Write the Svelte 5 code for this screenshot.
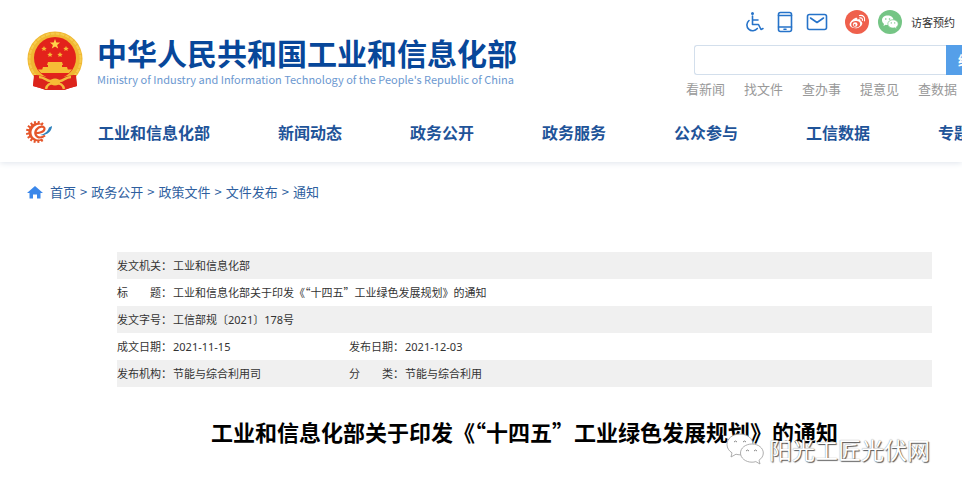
<script>
  const navItems = ['工业和信息化部', '新闻动态', '政务公开', '政务服务', '公众参与', '工信数据', '专题专栏'];
  const quickLinks = ['看新闻', '找文件', '查办事', '提意见', '查数据'];
  const crumbs = ['首页', '政务公开', '政策文件', '文件发布', '通知'];
  const title = '工业和信息化部关于印发《“十四五”工业绿色发展规划》的通知';
  const teeth = Array.from({ length: 12 }, (_, i) => 60 + i * 22);
</script>

<div class="page" lang="zh-CN">
  <header>
    <div class="top">
      <a class="brand" href="#home">
        <svg class="emblem" viewBox="0 0 56 60" aria-hidden="true">
          <path d="M8 40 6 55l7 2 6 2h18l6-2 7-2-2-15z" fill="#d8251c" />
          <circle cx="28" cy="28" r="27.500" fill="#f0b732" />
          <circle cx="28" cy="28" r="25.500" fill="none" stroke="#f6cb4c" stroke-width="2" stroke-dasharray="4 1" />
          <circle cx="28" cy="27" r="21" fill="#e3221b" />
          <path d="m28 8 1.300 3.600h3.800l-3 2.300 1.100 3.700-3.200-2.200-3.200 2.200 1.100-3.700-3-2.300h3.800z" fill="#ffd34a" />
          <g fill="#f6bd36">
            <path d="m17 15 .8 1.700 1.900.2-1.400 1.300.4 1.900-1.700-1-1.700 1 .4-1.900-1.400-1.300 1.900-.2z" />
            <path d="m39 15 .8 1.700 1.900.2-1.400 1.300.4 1.900-1.700-1-1.700 1 .4-1.900-1.400-1.300 1.900-.2z" />
            <path d="m23 21 .8 1.700 1.900.2-1.400 1.300.4 1.900-1.700-1-1.700 1 .4-1.900-1.400-1.300 1.900-.2z" />
            <path d="m33 21 .8 1.700 1.900.2-1.400 1.300.4 1.900-1.700-1-1.700 1 .4-1.900-1.400-1.300 1.900-.2z" />
            <path d="M21 31h14l1 3h-1v2h5l1 3H15l1-3h5v-2h-1zM11 38.500h34l-3 3.500H14z" />
          </g>
          <path d="M7 44c7 0 10 2 14 2l7-1 7 1c4 0 7-2 14-2l1 11-7 2-6 2H19l-6-2-7-2z" fill="#dc241c" />
          <path d="M12 46c6 0 7 4 11 4h10c4 0 5-4 11-4M19 58c1-5 4-6 9-6s8 1 9 6" fill="none" stroke="#f3ba3c" stroke-width="2.500" />
          <ellipse cx="28" cy="51" rx="5" ry="3.500" fill="#f6bd36" />
        </svg>
        <span class="names">
          <strong>中华人民共和国工业和信息化部</strong>
          <span class="en" lang="en">Ministry of Industry and Information Technology of the People's Republic of China</span>
        </span>
      </a>

      <div class="tools">
        <div class="icons">
          <a href="#access" aria-label="无障碍">
            <svg class="line" width="20" height="22" viewBox="0 0 20 22">
              <circle cx="8.500" cy="2.500" r="1.500" fill="#2673c9" stroke="none" />
              <path d="M8.500 5v8.500h6l2.500 5 2-1M8.500 9h5.500M5 9.500a5.800 5.800 0 1 0 8.300 8" />
            </svg>
          </a>
          <a href="#mobile" aria-label="手机版">
            <svg class="line" width="16" height="22" viewBox="0 0 16 22">
              <rect x="1.500" y="1.500" width="13" height="19" rx="2" />
              <path d="M1.500 4.500h13M1.500 16h13M7 18.300h2" />
            </svg>
          </a>
          <a href="#mail" aria-label="邮箱">
            <svg class="line" width="22" height="22" viewBox="0 0 22 22">
              <rect x="1.500" y="3.500" width="19" height="15" rx="2" />
              <path d="m4.500 7 6.500 4.500L17.500 7" />
            </svg>
          </a>
          <a class="weibo" href="#weibo" aria-label="微博">
            <svg width="24" height="24" viewBox="0 0 24 24">
              <circle cx="12" cy="12" r="12" fill="#ef604c" />
              <path d="M10 8.200c1.500-.7 2.700-.4 2.300 1.300 2-.8 3.800-.3 3.200 1.500 2.200.8 2.400 2.800.8 4.700-2.600 3-8.300 3.400-10.800.9-2.600-2.700 1.300-7.200 4.500-8.400z" fill="#fff" />
              <ellipse cx="10.700" cy="14.300" rx="4.500" ry="3.300" transform="rotate(-8 10.700 14.300)" fill="#ef604c" />
              <circle cx="10.200" cy="14.500" r="2.300" fill="#fff" />
              <circle cx="9.700" cy="14.900" r="1" fill="#ef604c" />
              <path d="M14.500 5.500c3.600-.8 6 2 5 5.300M14.800 7.900c1.900-.4 3 .8 2.600 2.500" fill="none" stroke="#fff" stroke-width="1.200" stroke-linecap="round" />
            </svg>
          </a>
          <a href="#wechat" aria-label="微信">
            <svg width="24" height="24" viewBox="0 0 24 24">
              <circle cx="12" cy="12" r="12" fill="#75c585" />
              <path d="M9.700 5.500c-3.300 0-5.700 2-5.700 4.700 0 1.500.8 2.800 2 3.600L5.500 16l2.200-1.200c.7.200 1.300.3 2 .3 3.300 0 5.800-2.200 5.800-4.900S13 5.500 9.700 5.500z" fill="#fff" />
              <path d="M15 9.700c-2.900 0-5.200 1.900-5.200 4.200s2.300 4.200 5.200 4.200c.6 0 1.200-.1 1.800-.3l2 1.100-.5-1.800c1.200-.8 1.900-1.900 1.900-3.200 0-2.300-2.300-4.200-5.200-4.200z" fill="#fff" stroke="#75c585" stroke-width=".7" />
              <g fill="#75c585"><circle cx="7.800" cy="9" r=".8" /><circle cx="11.500" cy="9" r=".8" /><circle cx="13.300" cy="12.900" r=".7" /><circle cx="16.700" cy="12.900" r=".7" /></g>
            </svg>
          </a>
          <a class="visit" href="#visit">访客预约</a>
        </div>
        <form class="search" onsubmit={(e) => e.preventDefault()}>
          <input type="text" aria-label="搜索" />
          <button>综合搜索</button>
        </form>
        <div class="quick">
          {#each quickLinks as link}<a href="#search">{link}</a>{/each}
        </div>
      </div>
    </div>

    <nav>
      <svg class="gear" width="28" height="24" viewBox="0 0 28 24" aria-hidden="true">
        <g stroke="#e5562b" stroke-width="2">
          {#each teeth as angle}
            <path d="M20 12h3" transform="rotate({angle} 12 12)" />
          {/each}
        </g>
        <path d="M19 18.500A9.200 9.200 0 1 1 19 5.500C14 2.500 7 6 6.500 12c-.3 6 6.500 9.500 12.500 6.500z" fill="#e5562b" />
        <path d="M10 13c5 .5 9.500-1.500 9.500-4.200 0-3-5.500-2.800-8 .7-2.800 4-.3 8 3.500 8 2 0 3.500-.8 5-2" fill="none" stroke="#e5562b" stroke-width="2.200" />
        <path d="M15 15c5-1 8-4 9-7.500L27 6c0 5-5 10-12 9z" fill="#2e82bd" />
      </svg>
      {#each navItems as item}<a href="#nav">{item}</a>{/each}
    </nav>
  </header>

  <main>
    <div class="crumbs">
      <svg width="16" height="14" viewBox="0 0 16 14" aria-hidden="true">
        <path d="M8 1 0 8h2.500v5.500H6V9.500h4v4h3.500V8H16z" fill="#3a87ea" />
      </svg>
      {#each crumbs as crumb, i}
        {#if i}<span>&gt;</span>{/if}<a href="#crumb">{crumb}</a>
      {/each}
    </div>

    <article>
      <table>
        <colgroup><col class="label" /><col class="value" /><col class="label" /><col /></colgroup>
        <tbody>
          <tr><th scope="row">发文机关：</th><td colspan="3">工业和信息化部</td></tr>
          <tr><th scope="row">标　　题：</th><td colspan="3">{title}</td></tr>
          <tr><th scope="row">发文字号：</th><td colspan="3" class="num">工信部规〔2021〕178号</td></tr>
          <tr><th scope="row">成文日期：</th><td class="num">2021-11-15</td><th scope="row">发布日期：</th><td class="num">2021-12-03</td></tr>
          <tr><th scope="row">发布机构：</th><td>节能与综合利用司</td><th scope="row">分　　类：</th><td>节能与综合利用</td></tr>
        </tbody>
      </table>
      <h1>{title}</h1>
    </article>
  </main>

  <div class="watermark">
    <svg width="40" height="32" viewBox="0 0 40 32" aria-hidden="true">
      <g fill="#fff" stroke="#999" stroke-width=".8">
        <path d="M14 1C6.500 1 1 5.500 1 11.500c0 3.500 2 6.500 5 8.300L5 24l5-2.800c1.300.4 2.700.6 4 .6 7.500 0 13-4.500 13-10.300S21.500 1 14 1z" />
        <path d="M26 11c-6.500 0-11.500 4-11.500 9s5 9.200 11.500 9.200c1.300 0 2.600-.2 3.800-.6L34 31l-1-3.800c2.600-1.700 4.300-4.200 4.300-7.200 0-5-5-9-11.300-9z" />
      </g>
      <g fill="none" stroke="#888"><path d="M8 9q1.500-2 3 0M17 9q1.500-2 3 0M20 18q1.500-2 3 0M28 18q1.500-2 3 0" /></g>
    </svg>
    <span>阳光工匠光伏网</span>
  </div>
</div>

<style>
  :global(body) { margin: 0; background: #fff; }
  .page {
    position: relative;
    overflow: hidden;
    min-height: 100vh;
    font-family: "Noto Sans CJK SC", sans-serif;
    color: #333;
  }
  a { color: inherit; text-decoration: none; white-space: nowrap; }
  svg { display: block; flex: none; }
  header { height: 162px; background: #fff; box-shadow: 0 1px 6px #dfe4ec; }
  .top { display: flex; justify-content: space-between; height: 101px; }
  .brand { display: flex; gap: 14px; padding: 31px 0 0 27px; }
  .emblem { width: 56px; height: 60px; }
  .names { display: flex; flex-direction: column; }
  .names strong { font-size: 30px; line-height: 42px; color: #07479a; }
  .en { font-size: 11px; line-height: 12px; color: #6c98d0; }
  .tools { flex: none; width: 276px; }
  .icons { display: flex; align-items: center; gap: 13px; height: 24px; padding: 10px 0 0 58px; }
  .line { fill: none; stroke: #2673c9; stroke-width: 1.6; stroke-linecap: round; stroke-linejoin: round; }
  .weibo { margin: 0 -4px 0 4px; }
  .visit { margin-left: -4px; font-size: 11px; }
  .search { display: flex; margin: 11px 0 0 8px; }
  .search input {
    box-sizing: border-box; flex: none; width: 252px; height: 30px;
    border: 1px solid #d3dfec; border-right: 0; border-radius: 3px 0 0 3px;
    background: #fff; outline: 0;
  }
  .search button {
    flex: none; width: 96px; height: 30px; padding: 0 0 0 12px; border: 0;
    background: #559fe9; color: #fff; text-align: left;
    font: bold 13px/30px "Noto Sans CJK SC", sans-serif;
  }
  .quick { display: flex; gap: 19px; margin-top: 4px; font-size: 13px; line-height: 20px; color: #999; }
  nav {
    display: flex; align-items: center; gap: 68px; height: 61px; padding-left: 25px;
    font-size: 16px; font-weight: bold; color: #1f5499;
  }
  .gear { margin-right: -23px; }
  .crumbs {
    display: flex; align-items: center; gap: 4px; padding: 20px 27px 0;
    font-size: 13px; line-height: 20px; color: #2f5f9f;
  }
  .crumbs svg { margin-right: 3px; }
  article { margin: 50px 30px 0 117px; }
  table { width: 100%; table-layout: fixed; border-collapse: collapse; font-size: 11px; line-height: 27px; }
  .label { width: 56px; }
  .value { width: 176px; }
  th, td { padding: 0; height: 27px; text-align: left; font-weight: normal; white-space: nowrap; }
  .num { font-family: "Noto Sans", "Noto Sans CJK SC", sans-serif; }
  tr:nth-child(odd) { background: #f0f0f0; }
  h1 { margin: 28px 0 0; font-size: 22px; line-height: 32px; text-align: center; color: #000; white-space: nowrap; }
  .watermark {
    position: absolute; right: 32px; top: 431px; display: flex; align-items: center; gap: 3px;
    font-size: 23px; line-height: 36px; color: #fff; text-shadow: 1px 1px 1px #555, 0 0 1px #777;
  }
</style>
